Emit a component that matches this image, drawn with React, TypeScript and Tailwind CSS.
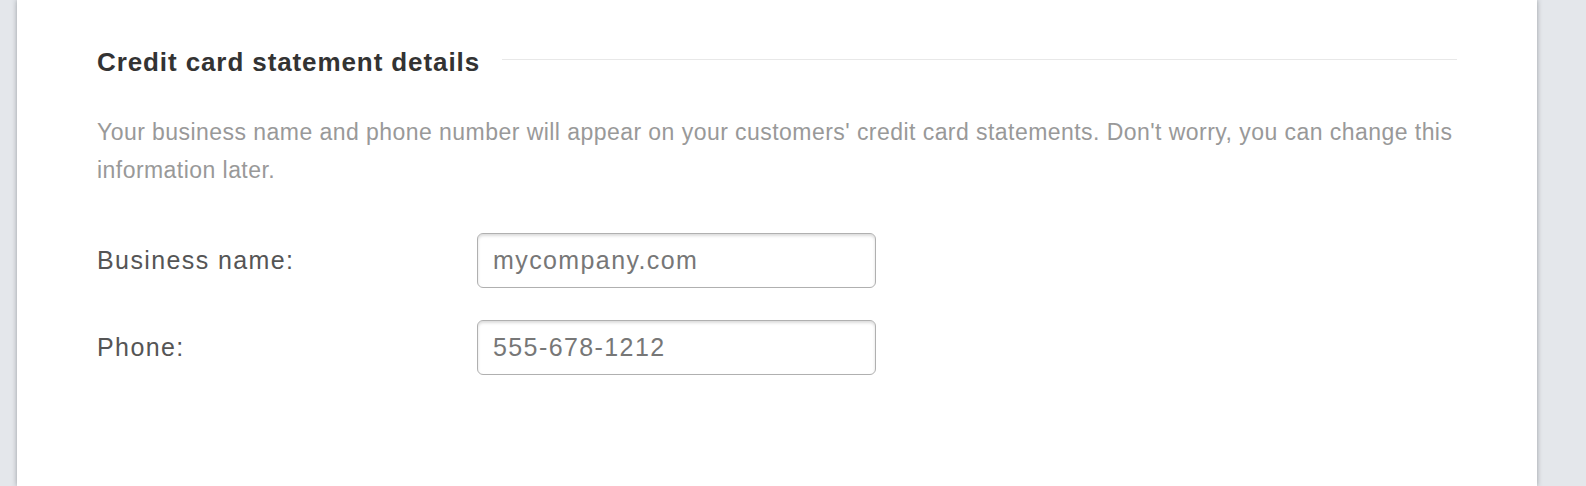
import React from "react";

export default function App() {
  const font = { fontFamily: '"Liberation Sans", Arial, sans-serif' } as const;
  return (
    <div className="w-full h-[486px] bg-[#e4e7eb] pl-[17px] pr-[49px] overflow-hidden" style={font}>
      <div className="h-full bg-white shadow-[0_0_5px_rgba(60,64,70,0.45)] pl-[80px] pr-[80px] pt-[44px]">
        <div className="flex items-center gap-[22px]">
          <h2 className="text-[26px] leading-[36px] font-bold text-[#333] tracking-[0.9px] whitespace-nowrap">
            Credit card statement details
          </h2>
          <div className="flex-1 h-px bg-[#e8e8e8] -mt-[6px]" />
        </div>
        <p className="mt-[33px] text-[23px] leading-[38px] text-[#999] tracking-[0.45px]">
          Your business name and phone number will appear on your customers' credit card statements. Don't worry, you can change this information later.
        </p>
        <div className="mt-[44px] flex flex-col gap-[32px]">
          <div className="flex items-center">
            <label className="w-[380px] text-[25px] text-[#555] tracking-[1.4px]">Business name:</label>
            <div className="w-[399px] h-[55px] rounded-[6px] border border-[#b0b0b0] shadow-[inset_0_2px_3px_rgba(0,0,0,0.14)] pl-[15px] flex items-center text-[25px] text-[#777] tracking-[1.4px]">
              mycompany.com
            </div>
          </div>
          <div className="flex items-center">
            <label className="w-[380px] text-[25px] text-[#555] tracking-[1.4px]">Phone:</label>
            <div className="w-[399px] h-[55px] rounded-[6px] border border-[#b0b0b0] shadow-[inset_0_2px_3px_rgba(0,0,0,0.14)] pl-[15px] flex items-center text-[25px] text-[#777] tracking-[1.4px]">
              555-678-1212
            </div>
          </div>
        </div>
      </div>
    </div>
  );
}
